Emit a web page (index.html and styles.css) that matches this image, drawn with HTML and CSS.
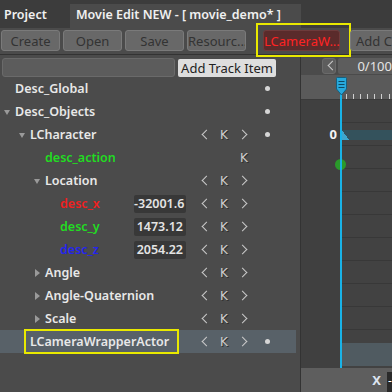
FILE: index.html
```html
<!DOCTYPE html>
<html lang="en">
  <head>
    <meta charset="UTF-8" />
    <title>Movie Edit</title>
    <link rel="stylesheet" href="styles.css">
  </head>
  <body>
    <div class="app">
      <div class="tabs">
        <div class="tab">Project</div>
        <div class="tab active">Movie Edit NEW - [ movie_demo* ]</div>
      </div>

      <div class="toolbar">
        <button class="btn">Create</button>
        <button class="btn">Open</button>
        <button class="btn">Save</button>
        <button class="btn">Resourc...</button>
        <button class="btn btn-red marked">LCameraW...</button>
        <button class="btn btn-add">Add C</button>
      </div>

      <div class="main">
        <div class="tree">
          <div class="search-row">
            <input class="search" type="text">
            <button class="add-track">Add Track Item</button>
          </div>

          <div class="row d0">
            <div class="label"><span class="tw"></span>Desc_Global</div>
            <div class="ctls"><span></span><span></span><span></span><span class="dot"></span></div>
          </div>
          <div class="row d0">
            <div class="label"><span class="tw open"></span>Desc_Objects</div>
            <div class="ctls"><span></span><span></span><span></span><span class="dot"></span></div>
          </div>
          <div class="row d1">
            <div class="label"><span class="tw open"></span>LCharacter</div>
            <div class="ctls">
              <span class="prev"></span><span class="key">K</span><span class="next"></span><span class="dot"></span>
            </div>
          </div>
          <div class="row d2">
            <div class="label green"><span class="tw"></span>desc_action</div>
            <div class="ctls"><span></span><span></span><span class="key">K</span><span></span></div>
          </div>
          <div class="row d2">
            <div class="label"><span class="tw open"></span>Location</div>
            <div class="ctls"><span class="prev"></span><span class="key">K</span><span class="next"></span><span></span></div>
          </div>
          <div class="row d3">
            <div class="label red"><span class="tw"></span>desc_x</div>
            <div class="val">-32001.6</div>
            <div class="ctls"><span class="prev"></span><span class="key">K</span><span class="next"></span><span></span></div>
          </div>
          <div class="row d3">
            <div class="label green"><span class="tw"></span>desc_y</div>
            <div class="val">1473.12</div>
            <div class="ctls"><span class="prev"></span><span class="key">K</span><span class="next"></span><span></span></div>
          </div>
          <div class="row d3">
            <div class="label blue"><span class="tw"></span>desc_z</div>
            <div class="val">2054.22</div>
            <div class="ctls"><span class="prev"></span><span class="key">K</span><span class="next"></span><span></span></div>
          </div>
          <div class="row d2">
            <div class="label"><span class="tw closed"></span>Angle</div>
            <div class="ctls"><span class="prev"></span><span class="key">K</span><span class="next"></span><span></span></div>
          </div>
          <div class="row d2">
            <div class="label"><span class="tw closed"></span>Angle-Quaternion</div>
            <div class="ctls"><span class="prev"></span><span class="key">K</span><span class="next"></span><span></span></div>
          </div>
          <div class="row d2">
            <div class="label"><span class="tw closed"></span>Scale</div>
            <div class="ctls"><span class="prev"></span><span class="key">K</span><span class="next"></span><span></span></div>
          </div>
          <div class="row d1 selected">
            <div class="label"><span class="tw"></span><span class="marked">LCameraWrapperActor</span></div>
            <div class="ctls">
              <span class="prev"></span><span class="key">K</span><span class="next"></span><span class="dot"></span>
            </div>
          </div>
        </div>

        <div class="timeline">
          <div class="tl-head">
            <button class="nav"><span class="prev"></span></button>
            <div class="frame">0/100</div>
          </div>
          <div class="ruler"><div class="ticks"></div></div>
          <div class="tracks">
            <div class="tl-left">
              <div class="lane"></div>
              <div class="lane zero">0</div>
            </div>
            <div class="tl-grid">
              <div class="lane"></div>
              <div class="lane"><div class="bar"></div></div>
              <div class="lane"><div class="keydot"></div></div>
              <div class="lane"></div>
              <div class="lane"></div>
              <div class="lane"></div>
              <div class="lane"></div>
              <div class="lane"></div>
              <div class="lane"></div>
              <div class="lane"></div>
              <div class="lane selected"></div>
            </div>
          </div>
          <div class="tl-foot">
            <span class="axis">X</span>
            <span class="field">-</span>
          </div>

          <svg class="playhead" width="13" height="291" viewBox="0 0 13 291">
            <rect x="5" y="14" width="2" height="277" fill="#19b3e8" />
            <path d="M1.5 1.5 Q1.5 0.5 2.5 0.5 H10.5 Q11.5 0.5 11.5 1.5 V12 L6.5 18 L1.5 12 Z"
              fill="#27a9dc" stroke="#15607f" stroke-width="1" />
            <path d="M3.5 4.5 H9.5 M3.5 7.5 H9.5 M3.5 10.5 H9.5" stroke="#0f4a63" stroke-width="1" />
          </svg>
        </div>
      </div>
    </div>
  </body>
</html>
```

FILE: styles.css
```css
body {
  margin: 0;
  background-color: #4b4b4b;
  font-family: "Noto Sans", "DejaVu Sans", sans-serif;
  font-size: 12px;
  color: #e8e8e8;
}
.app {
  width: 392px;
  height: 392px;
  overflow: hidden;
  display: flex;
  flex-direction: column;
}

/* tabs */
.tabs {
  height: 28px;
  background-color: #3c3c3c;
  display: flex;
  align-items: flex-end;
  flex-shrink: 0;
}
.tab {
  height: 24px;
  line-height: 22px;
  width: 66px;
  padding-left: 4px;
  font-size: 12.5px;
  font-weight: 600;
  color: #f0f0f0;
  white-space: nowrap;
}
.tab.active {
  width: 225px;
  padding-left: 6px;
  background-color: #4b4b4b;
}

/* toolbar */
.toolbar {
  height: 27px;
  padding: 2px 0 0 1px;
  box-sizing: border-box;
  display: flex;
  gap: 3px;
  border-bottom: 1px solid #333;
  flex-shrink: 0;
}
.btn {
  position: relative;
  width: 59px;
  height: 21px;
  padding: 0;
  background-color: #686868;
  border: 1px solid #7a7a7a;
  border-radius: 3px;
  font-family: "Noto Sans", "DejaVu Sans", sans-serif;
  font-size: 13px;
  color: #333;
  white-space: nowrap;
  overflow: hidden;
  flex-shrink: 0;
}
.btn-red {
  width: 77px;
  margin-left: 14px;
  overflow: visible;
  background-color: #5a2b2b;
  border-color: #6d3b3b;
  color: #ff2323;
}
.btn-add {
  width: 60px;
  margin-left: 7px;
  text-align: left;
  padding-left: 5px;
}
.marked {
  position: relative;
}
.marked::after {
  content: "";
  position: absolute;
  border: 2px solid #e9e900;
}
.btn.marked::after {
  top: -8px;
  bottom: -7px;
  left: -8px;
  right: -12px;
}

/* main area */
.main {
  flex: 1;
  display: flex;
  min-height: 0;
}
.tree {
  width: 300px;
  border-right: 1px solid #333;
  flex-shrink: 0;
}
.search-row {
  height: 22px;
  display: flex;
  align-items: flex-start;
  padding: 3px 0 0 2px;
  box-sizing: border-box;
}
.search {
  width: 173px;
  height: 19px;
  box-sizing: border-box;
  background-color: #5c5c5c;
  border: 1px solid #6a6a6a;
  border-radius: 3px;
  margin: 0;
}
.add-track {
  margin: 1px 0 0 3px;
  width: 98px;
  height: 18px;
  padding: 0;
  background-color: #dedede;
  border: none;
  border-radius: 2px;
  font-family: "Noto Sans", "DejaVu Sans", sans-serif;
  font-size: 13px;
  color: #222;
  line-height: 18px;
}

.row {
  width: 296px;
  height: 23px;
  display: flex;
  align-items: center;
}
.row.selected {
  background-color: #586168;
}
.label {
  flex: 1;
  display: flex;
  align-items: center;
  font-size: 12.5px;
  font-weight: 600;
  white-space: nowrap;
}
.d0 .label { padding-left: 3px; }
.d1 .label { padding-left: 18px; }
.d2 .label { padding-left: 33px; }
.d3 .label { padding-left: 48px; }
.label.green { color: #22dd22; }
.label.red { color: #f02020; }
.label.blue { color: #2424f0; }

.tw {
  width: 12px;
  height: 10px;
  flex-shrink: 0;
  position: relative;
}
.tw.open::before {
  content: "";
  position: absolute;
  left: 1px;
  top: 3px;
  border-left: 3.5px solid transparent;
  border-right: 3.5px solid transparent;
  border-top: 5px solid #9a9a9a;
}
.tw.closed::before {
  content: "";
  position: absolute;
  left: 2px;
  top: 1px;
  border-top: 4px solid transparent;
  border-bottom: 4px solid transparent;
  border-left: 5px solid #9a9a9a;
}
.label .marked::after {
  top: -4px;
  bottom: -4px;
  left: -6px;
  right: -10px;
}

.val {
  width: 52px;
  height: 18px;
  box-sizing: border-box;
  margin-right: 8px;
  padding-right: 3px;
  background-color: #383838;
  border-radius: 2px;
  text-align: right;
  line-height: 18px;
  font-size: 12.5px;
  font-weight: 600;
  color: #e4e4e4;
}

.ctls {
  width: 86px;
  margin-right: 16px;
  display: grid;
  grid-template-columns: 20px 20px 20px 26px;
  align-items: center;
  justify-items: center;
  height: 23px;
}
.ctls span {
  height: 12px;
}
.key {
  font-family: "DejaVu Sans", sans-serif;
  font-size: 12px;
  line-height: 12px;
  color: #cfcfcf;
  text-shadow: 1px 1px 0 #2e2e2e;
}
.prev,
.next {
  display: block;
  width: 9px;
  position: relative;
}
.prev::before,
.next::before {
  content: "";
  position: absolute;
  top: 2px;
  width: 7px;
  height: 7px;
  border-left: 1.6px solid #cacaca;
  border-bottom: 1.6px solid #cacaca;
  box-sizing: border-box;
}
.prev::before {
  left: 3px;
  transform: rotate(45deg);
}
.next::before {
  left: -1px;
  transform: rotate(-135deg);
}
.dot {
  display: block;
  width: 5px;
  height: 5px !important;
  border-radius: 50%;
  background-color: #d6d6d6;
}

/* timeline */
.timeline {
  flex: 1;
  position: relative;
  display: flex;
  flex-direction: column;
  overflow: hidden;
}
.tl-head {
  height: 20px;
  display: flex;
  align-items: flex-start;
  padding: 3px 0 0 21px;
  box-sizing: border-box;
}
.nav {
  width: 18px;
  height: 16px;
  padding: 0 0 0 3px;
  background-color: #5d5d5d;
  border: 1px solid #6a6a6a;
  border-radius: 3px;
}
.nav .prev {
  height: 11px;
}
.nav .prev::before {
  top: 1px;
}
.frame {
  flex: 1;
  height: 16px;
  margin-left: 2px;
  padding-left: 19px;
  background-color: #5d5d5d;
  border-radius: 2px 0 0 2px;
  line-height: 16px;
  font-size: 13px;
  color: #e4e4e4;
  white-space: nowrap;
}
.ruler {
  height: 25px;
  background-color: #5a5a5a;
  box-sizing: border-box;
  border-bottom: 1px solid #3a3a3a;
  display: flex;
  align-items: flex-end;
}
.ticks {
  flex: 1;
  margin-left: 45px;
  height: 5px;
  background-image: repeating-linear-gradient(to right, #cfcfcf 0 1px, transparent 1px 7.1px);
}
.tracks {
  flex: 1;
  display: flex;
}
.lane {
  height: 23px;
}
.tl-left {
  width: 41px;
  background-color: #404040;
}
.zero {
  text-align: right;
  padding-right: 5px;
  font-size: 13px;
  font-weight: 700;
  line-height: 23px;
  color: #f4f4f4;
}
.tl-grid {
  flex: 1;
  background-color: #424242;
  background-image:
    repeating-linear-gradient(to right, transparent 0 7px, #383838 7px 8px),
    repeating-linear-gradient(to bottom, transparent 0 22px, #383838 22px 23px);
  background-size: 7.2px 100%, 100% 23px;
}
.lane.selected {
  background-color: #505b61;
}
.bar {
  margin-top: 7px;
  height: 10px;
  background-color: #34525c;
  background-image: linear-gradient(to top right, #3fa6cc 50%, transparent 50%);
  background-size: 7px 10px;
  background-repeat: no-repeat;
}
.keydot {
  width: 11px;
  height: 11px;
  margin: 6px 0 0 -7px;
  border-radius: 50%;
  background-color: #2a9a2a;
}
.tl-foot {
  height: 24px;
  background-color: #5e5e5e;
  display: flex;
  justify-content: flex-end;
  align-items: flex-end;
  flex-shrink: 0;
}
.axis {
  align-self: center;
  margin-right: 6px;
  font-size: 13px;
  font-weight: 700;
  color: #dde4f0;
}
.field {
  width: 5px;
  height: 20px;
  background-color: #2a2a2a;
  color: #fff;
  overflow: hidden;
  text-indent: 1px;
}
.playhead {
  position: absolute;
  left: 34px;
  top: 22px;
}
```
